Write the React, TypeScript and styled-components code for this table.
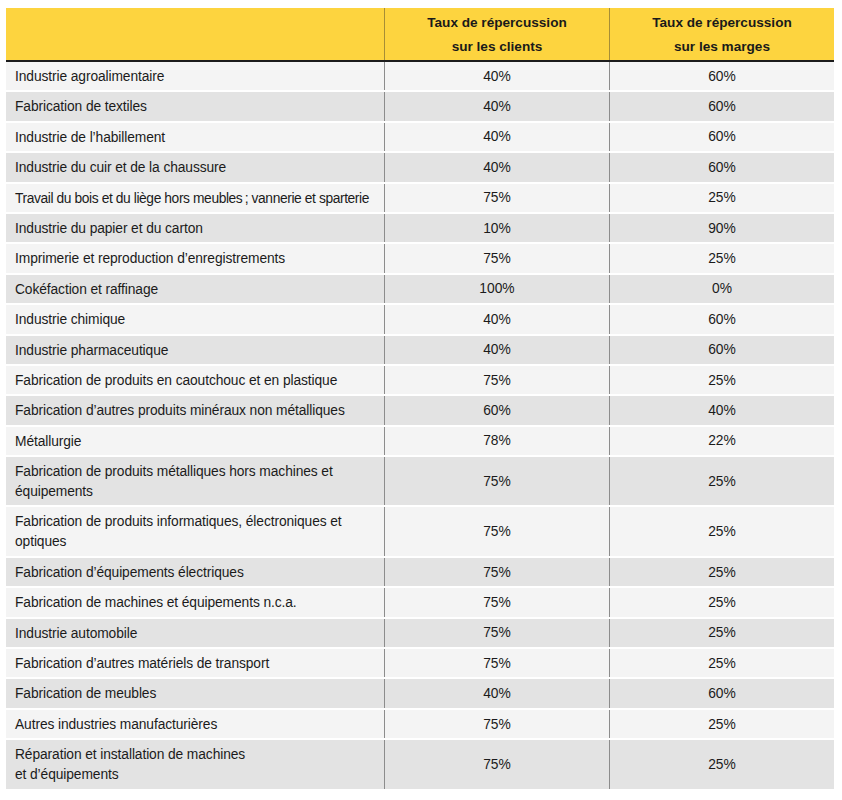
import React from 'react'
import styled, { createGlobalStyle } from 'styled-components'

const GlobalStyle = createGlobalStyle`
  body {
    margin: 0;
    background: #ffffff;
    font-family: "Liberation Sans", Arial, sans-serif;
    color: #1b1b1b;
  }
`

const Page = styled.div`
  padding: 8px 0 12px 6px;
`

const Table = styled.div`
  width: 828px;
  display: flex;
  flex-direction: column;
  gap: 2px;
`

const HeaderRow = styled.div`
  display: grid;
  grid-template-columns: 378px 225px 225px;
  background: #fdd43f;
  border-bottom: 2px solid #1c1c1c;
  height: 52px;
  margin-bottom: -2px;
`

const HeaderCell = styled.div`
  display: flex;
  align-items: center;
  justify-content: center;
  padding-top: 2px;
  text-align: center;
  font-weight: 700;
  font-size: 13.6px;
  line-height: 24px;
  color: #1a1a1a;
  border-left: 1px solid #a78e36;
  &:first-child {
    border-left: none;
  }
`

const Row = styled.div<{ $dark: boolean }>`
  display: grid;
  grid-template-columns: 378px 225px 225px;
  background: ${p => (p.$dark ? '#e3e3e3' : '#f4f4f4')};
`

const LabelCell = styled.div<{ $tight?: boolean }>`
  padding: 5px 4px 3.4px 9px;
  font-size: 13.8px;
  line-height: 20px;
  letter-spacing: ${p => (p.$tight ? '-0.4px' : '-0.1px')};
  white-space: nowrap;
`

const ValueCell = styled.div`
  display: flex;
  align-items: center;
  justify-content: center;
  padding-top: 1px;
  font-size: 13.8px;
  line-height: 20px;
  border-left: 1px solid #8c8c8c;
`

type Line = [string, string, string]

const rows: Line[] = [
  ['Industrie agroalimentaire', '40%', '60%'],
  ['Fabrication de textiles', '40%', '60%'],
  ['Industrie de l’habillement', '40%', '60%'],
  ['Industrie du cuir et de la chaussure', '40%', '60%'],
  ['Travail du bois et du liège hors meubles\u2009; vannerie et sparterie', '75%', '25%'],
  ['Industrie du papier et du carton', '10%', '90%'],
  ['Imprimerie et reproduction d’enregistrements', '75%', '25%'],
  ['Cokéfaction et raffinage', '100%', '0%'],
  ['Industrie chimique', '40%', '60%'],
  ['Industrie pharmaceutique', '40%', '60%'],
  ['Fabrication de produits en caoutchouc et en plastique', '75%', '25%'],
  ['Fabrication d’autres produits minéraux non métalliques', '60%', '40%'],
  ['Métallurgie', '78%', '22%'],
  ['Fabrication de produits métalliques hors machines et\néquipements', '75%', '25%'],
  ['Fabrication de produits informatiques, électroniques et\noptiques', '75%', '25%'],
  ['Fabrication d’équipements électriques', '75%', '25%'],
  ['Fabrication de machines et équipements n.c.a.', '75%', '25%'],
  ['Industrie automobile', '75%', '25%'],
  ['Fabrication d’autres matériels de transport', '75%', '25%'],
  ['Fabrication de meubles', '40%', '60%'],
  ['Autres industries manufacturières', '75%', '25%'],
  ['Réparation et installation de machines\net d’équipements', '75%', '25%'],
]

const App: React.FC = () => (
  <Page>
    <GlobalStyle />
    <Table>
      <HeaderRow>
        <HeaderCell />
        <HeaderCell>Taux de répercussion<br />sur les clients</HeaderCell>
        <HeaderCell>Taux de répercussion<br />sur les marges</HeaderCell>
      </HeaderRow>
      {rows.map(([label, clients, marges], i) => (
        <Row key={label} $dark={i % 2 === 1}>
          <LabelCell $tight={!label.includes('\n') && label.length > 56}>
            {label.split('\n').map((part, j) => (
              <React.Fragment key={j}>
                {j > 0 && <br />}
                {part}
              </React.Fragment>
            ))}
          </LabelCell>
          <ValueCell>{clients}</ValueCell>
          <ValueCell>{marges}</ValueCell>
        </Row>
      ))}
    </Table>
  </Page>
)

export default App
